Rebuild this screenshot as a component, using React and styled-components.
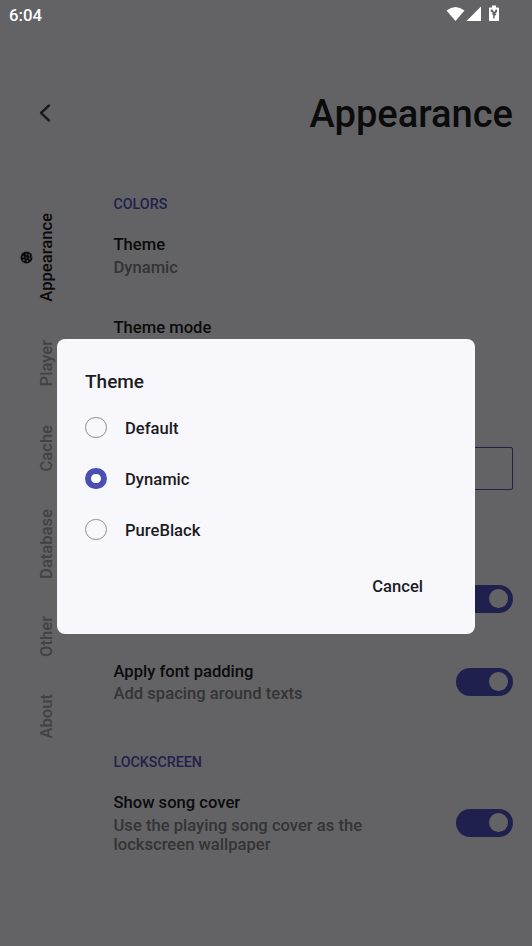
import React from "react";
import styled, { createGlobalStyle } from "styled-components";

const GlobalStyle = createGlobalStyle`
  * { box-sizing: border-box; }
  body {
    margin: 0;
    overflow: hidden;
    background: #f8f7fc;
    font-family: Roboto, "Noto Sans", sans-serif;
    font-weight: 500;
    font-size: 16.6px;
    color: #1c1c1f;
  }
`;

const Screen = styled.div`
  position: relative;
  width: 532px;
  height: 946px;
  overflow: hidden;
  display: flex;
  flex-direction: column;
`;

const Header = styled.header`
  display: flex;
  align-items: center;
  justify-content: space-between;
  height: 162px;
  padding: 64px 19px 0 38px;
`;

const BackIcon = styled.svg`
  width: 14px;
  height: 20px;
  margin-bottom: 1px;
  fill: none;
  stroke: #48484b;
  stroke-width: 2.4;
  stroke-linecap: round;
  stroke-linejoin: round;
`;

const Title = styled.h1`
  margin: 1px 0 0;
  font-size: 38.1px;
  font-weight: 500;
  line-height: 44px;
`;

const Body = styled.main`
  display: flex;
  flex: 1;
`;

const Rail = styled.nav`
  display: flex;
  flex-direction: column;
  align-items: flex-start;
  gap: 38px;
  width: 113.5px;
  padding: 50px 0 0 20px;
`;

const Tab = styled.div`
  display: flex;
  align-items: center;
  height: ${(p) => p.$height}px;
  color: ${(p) => (p.$active ? "#1c1c1f" : "#a5a5a9")};
`;

const TabIcon = styled.span`
  display: flex;
  width: 17px;
`;

const TabLabel = styled.span`
  writing-mode: vertical-rl;
  transform: rotate(180deg);
  line-height: 20px;
  white-space: nowrap;
`;

const Settings = styled.section`
  display: flex;
  flex-direction: column;
  flex: 1;
  padding: 32px 19px 0 0;
`;

const SectionLabel = styled.h2`
  margin: ${(p) => p.$top || 0}px 0 0;
  font-size: 14.25px;
  font-weight: 500;
  line-height: 20px;
  color: #5654bd;
`;

const Row = styled.div`
  display: flex;
  align-items: center;
  justify-content: space-between;
  height: ${(p) => p.$height || 83}px;
`;

const RowText = styled.div`
  display: flex;
  flex-direction: column;
  align-self: flex-start;
  gap: 2.5px;
  padding-top: 21px;
`;

const RowTitle = styled.div`
  line-height: 20px;
`;

const RowSubtitle = styled.div`
  width: 270px;
  line-height: 19.6px;
  color: #828286;
`;

const FieldRow = styled.div`
  height: 177.5px;
  padding-top: 67px;
`;

const Field = styled.div`
  height: 42.5px;
  border: 1.5px solid #5552b8;
  border-radius: 2px;
`;

const Track = styled.div`
  display: flex;
  align-items: center;
  justify-content: flex-end;
  width: 57px;
  height: 28px;
  margin-bottom: 1px;
  padding-right: 5px;
  border-radius: 14px;
  background: #5250c4;
`;

const Thumb = styled.div`
  width: 19px;
  height: 19px;
  border-radius: 50%;
  background: #f8f7fc;
`;

const Scrim = styled.div`
  position: absolute;
  inset: 0;
  display: flex;
  flex-direction: column;
  background: rgba(0, 0, 0, 0.6);
`;

const StatusBar = styled.div`
  display: flex;
  align-items: center;
  justify-content: space-between;
  height: 30px;
  padding: 0 32px 0 9px;
  color: #fff;
  font-size: 16.8px;
`;

const StatusIcons = styled.svg`
  width: 54px;
  height: 18px;
  margin-bottom: 2px;
  fill: #fff;
`;

const Dialog = styled.div`
  display: flex;
  flex-direction: column;
  width: 418px;
  height: 295px;
  margin: 309px 0 0 57px;
  padding: 32px 28px 0;
  border-radius: 8px;
  background: #f8f7fc;
`;

const DialogTitle = styled.div`
  margin-bottom: 10px;
  font-size: 19px;
  line-height: 22px;
`;

const Option = styled.div`
  display: flex;
  align-items: center;
  gap: 18.5px;
  height: 51px;
`;

const Radio = styled.span`
  width: 21.5px;
  height: 21.5px;
  margin-bottom: 2px;
  border-radius: 50%;
  border: ${(p) => (p.$checked ? "6px solid #4a4fb4" : "1px solid #8d8d93")};
  background: ${(p) => (p.$checked ? "#fff" : "transparent")};
`;

const DialogActions = styled.div`
  display: flex;
  justify-content: flex-end;
  padding: 20px 24px 0 0;
  line-height: 22px;
`;

function Palette() {
  return (
    <svg width="13" height="13" viewBox="0 0 24 24">
      <circle cx="12" cy="12" r="11" fill="#1c1c1f" />
      <g fill="#c4c4c8">
        <circle cx="7" cy="17" r="2" />
        <circle cx="6" cy="10.5" r="1.7" />
        <circle cx="12" cy="6" r="1.5" />
        <circle cx="13.5" cy="18.5" r="1.8" />
        <circle cx="12" cy="12.5" r="1.5" />
        <circle cx="18" cy="14" r="1.8" />
        <path d="M16 5h2v5h-2zM21 8l3 2v3l-3-2z" />
      </g>
    </svg>
  );
}

function Toggle() {
  return (
    <Track>
      <Thumb />
    </Track>
  );
}

const tabs = [
  { name: "Appearance", height: 90, active: true },
  { name: "Player", height: 47 },
  { name: "Cache", height: 47 },
  { name: "Database", height: 68 },
  { name: "Other", height: 40 },
  { name: "About", height: 45 },
];

function Setting({ title, subtitle, toggle, height }) {
  return (
    <Row $height={height}>
      <RowText>
        <RowTitle>{title}</RowTitle>
        {subtitle && <RowSubtitle>{subtitle}</RowSubtitle>}
      </RowText>
      {toggle && <Toggle />}
    </Row>
  );
}

export default function App() {
  return (
    <Screen>
      <GlobalStyle />
      <Header>
        <BackIcon viewBox="0 0 14 20">
          <path d="M11 2.5 3 10l8 7.5" />
        </BackIcon>
        <Title>Appearance</Title>
      </Header>
      <Body>
        <Rail>
          {tabs.map((t) => (
            <Tab key={t.name} $height={t.height} $active={t.active}>
              <TabIcon>{t.active && <Palette />}</TabIcon>
              <TabLabel>{t.name}</TabLabel>
            </Tab>
          ))}
        </Rail>
        <Settings>
          <SectionLabel>COLORS</SectionLabel>
          <Setting title="Theme" subtitle="Dynamic" />
          <Setting title="Theme mode" />
          <FieldRow>
            <Field />
          </FieldRow>
          <Setting toggle />
          <Setting title="Apply font padding" subtitle="Add spacing around texts" toggle />
          <SectionLabel $top={28.5}>LOCKSCREEN</SectionLabel>
          <Setting
            title="Show song cover"
            subtitle="Use the playing song cover as the lockscreen wallpaper"
            height={102}
            toggle
          />
        </Settings>
      </Body>
      <Scrim>
        <StatusBar>
          <span>6:04</span>
          <StatusIcons viewBox="0 0 54 18">
            <path d="M.5 5.5Q9.5-1.5 18.5 5.5L9.5 16Z" />
            <path d="M35 1.5V16H20.5Z" />
            <path
              fillRule="evenodd"
              d="M46 .5h4v2h2.3q.7 0 .7.7v12q0 .8-.8.8h-8.4q-.8 0-.8-.8v-12q0-.7.7-.7H46ZM44.8 4.5v2.2l2 .8-1 2h1.4v4h1.4v-2.2l2-2.6h-1.5l2-2V4.5h-1.3l-1.6 2.8-1.8-2.8Z"
            />
          </StatusIcons>
        </StatusBar>
        <Dialog role="dialog">
          <DialogTitle>Theme</DialogTitle>
          {["Default", "Dynamic", "PureBlack"].map((name) => (
            <Option key={name}>
              <Radio $checked={name === "Dynamic"} />
              {name}
            </Option>
          ))}
          <DialogActions>Cancel</DialogActions>
        </Dialog>
      </Scrim>
    </Screen>
  );
}
